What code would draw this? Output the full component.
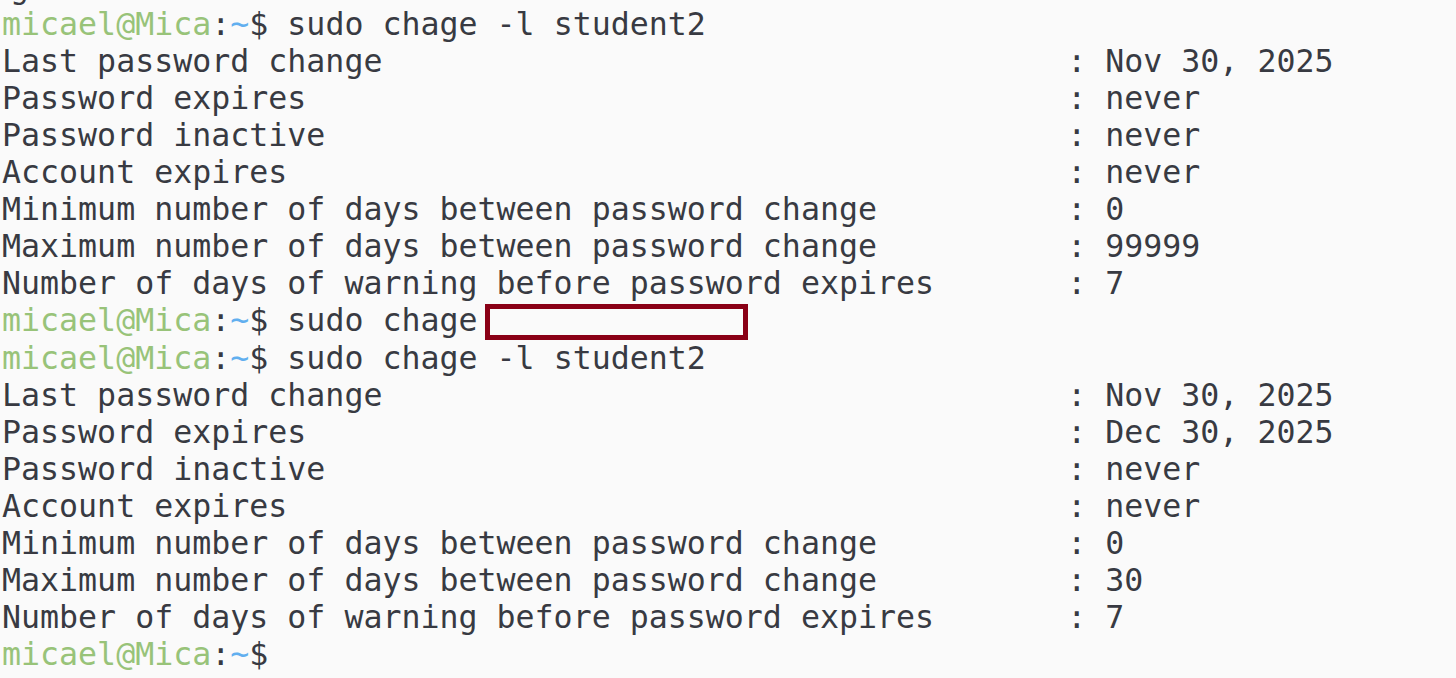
import React from "react";

const G = ({ children }) => <span className="text-[#98c379]">{children}</span>;
const B = ({ children }) => <span className="text-[#61afef]">{children}</span>;

function Prompt({ children }) {
  return (
    <div>
      <G>micael@Mica</G>:<B>~</B>${children}
    </div>
  );
}

const pad = (s) => s.padEnd(56, " ") + ": ";

function Block({ rows }) {
  return rows.map(([k, v], i) => <div key={i}>{pad(k) + v}</div>);
}

export default function App() {
  const first = [
    ["Last password change", "Nov 30, 2025"],
    ["Password expires", "never"],
    ["Password inactive", "never"],
    ["Account expires", "never"],
    ["Minimum number of days between password change", "0"],
    ["Maximum number of days between password change", "99999"],
    ["Number of days of warning before password expires", "7"],
  ];
  const second = [
    ["Last password change", "Nov 30, 2025"],
    ["Password expires", "Dec 30, 2025"],
    ["Password inactive", "never"],
    ["Account expires", "never"],
    ["Minimum number of days between password change", "0"],
    ["Maximum number of days between password change", "30"],
    ["Number of days of warning before password expires", "7"],
  ];
  return (
    <div className="w-[1456px] h-[678px] overflow-hidden bg-[#fafafa]">
      <div
        className="mt-[-31px] pl-[2px] whitespace-pre text-[#383a42] text-[31.6px] leading-[37px]"
        style={{ fontFamily: '"DejaVu Sans Mono", monospace' }}
      >
        <div className="pl-[8px]">g</div>
        <Prompt> sudo chage -l student2</Prompt>
        <Block rows={first} />
        <Prompt>
          {" sudo chage"}
          <span className="inline-block align-middle ml-[7px] w-[263px] h-[36px] border-[5px] border-[#8a0016]"></span>
        </Prompt>
        <Prompt> sudo chage -l student2</Prompt>
        <Block rows={second} />
        <Prompt />
      </div>
    </div>
  );
}
